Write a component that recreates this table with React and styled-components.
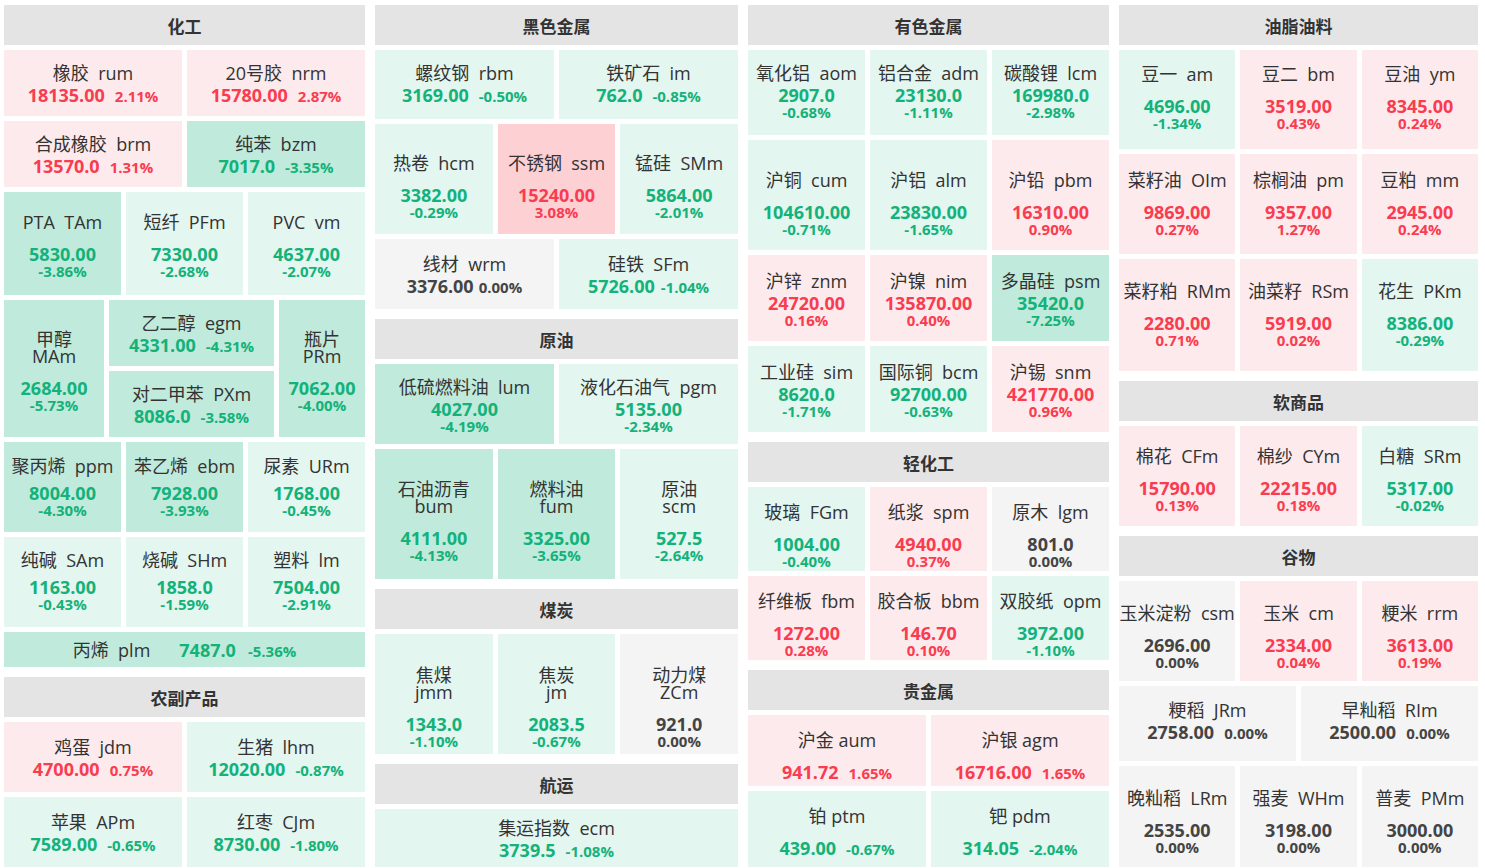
import React from 'react';
import styled, { createGlobalStyle } from 'styled-components';

const GlobalStyle = createGlobalStyle`
  html, body {
    margin: 0;
    padding: 0;
    background: #ffffff;
  }
  body {
    font-family: "Open Sans", "Noto Sans CJK SC", sans-serif;
    color: #333;
  }
`;

const Board = styled.div`
  display: grid;
  grid-template-columns: 361px 363px 361px 359px;
  column-gap: 10px;
  align-items: start;
  padding: 5px 0 0 4px;
`;

const Column = styled.div`
  display: flex;
  flex-direction: column;
  gap: 5px;
`;

const Header = styled.div`
  height: 40px;
  margin-top: ${p => (p.$first ? 0 : 5)}px;
  background: #e4e4e4;
  display: flex;
  align-items: center;
  justify-content: center;
  font-size: 17px;
  font-weight: 700;
  color: #333;
`;

const Row = styled.div`
  display: grid;
  grid-template-columns: ${p => p.$cols};
  grid-template-rows: ${p => p.$rows};
  gap: 5px;
`;

const Cell = styled.div`
  grid-row: ${p => (p.$span ? `span ${p.$span}` : 'auto')};
  min-width: 0;
  box-sizing: border-box;
  padding-top: ${p => Math.max(0, p.$shift * 2)}px;
  padding-bottom: ${p => Math.max(0, -p.$shift * 2)}px;
  background: ${p => p.$bg};
  display: flex;
  flex-direction: ${p => (p.$line ? 'row' : 'column')};
  align-items: center;
  justify-content: center;
  white-space: nowrap;
`;

const Name = styled.div`
  font-size: 18px;
  line-height: ${p => (p.$wrap ? 17 : 24)}px;
  margin-bottom: ${p => p.$gap}px;
  margin-right: ${p => (p.$line ? 29 : 0)}px;
  white-space: pre;
  text-align: center;
  color: #333;
`;

const Values = styled.div`
  display: flex;
  flex-direction: ${p => (p.$stack ? 'column' : 'row')};
  align-items: ${p => (p.$stack ? 'center' : 'baseline')};
  gap: ${p => (p.$stack ? 0 : p.$gap)}px;
`;

const Price = styled.span`
  font-size: 18px;
  font-weight: 700;
  line-height: 20px;
  color: ${p => p.$c};
`;

const Pct = styled.span`
  font-size: 15px;
  font-weight: 700;
  line-height: 14px;
  color: ${p => p.$c};
`;

const toneBg = n => {
  if (n >= 3) return '#fdd0d4';
  if (n > 0) return '#fdeaec';
  if (n === 0) return '#f4f4f4';
  if (n > -3) return '#e3f6ef';
  return '#c0eadb';
};

const toneText = n => (n > 0 ? '#f93c4f' : n < 0 ? '#13b27a' : '#444');

// mode: in = price and pct side by side, st = stacked, line = all on one line
const C = (name, code, price, pct, o = {}) => ({ name, code, price, pct, mode: 'st', gap: 0, sep: '  ', hgap: 10, ...o });
const IN = { mode: 'in' };
const LO = { gap: 10 };
const MID = { gap: 5 };
const WR = { wrap: true, gap: 13 };
const PM = { ...IN, ...LO, sep: ' ' };

const columns = [
  [
    {
      title: '化工',
      rows: [
        { h: 66, n: 2, items: [C('橡胶', 'rum', '18135.00', '2.11%', IN), C('20号胶', 'nrm', '15780.00', '2.87%', IN)] },
        { h: 66, n: 2, items: [C('合成橡胶', 'brm', '13570.0', '1.31%', IN), C('纯苯', 'bzm', '7017.0', '-3.35%', IN)] },
        { h: 103, n: 3, items: [C('PTA', 'TAm', '5830.00', '-3.86%', LO), C('短纤', 'PFm', '7330.00', '-2.68%', LO), C('PVC', 'vm', '4637.00', '-2.07%', LO)] },
        {
          tmpl: '100px 165px 1fr',
          rowsT: '66px 66px',
          items: [
            C('甲醇', 'MAm', '2684.00', '-5.73%', { ...WR, span: 2, shift: 3 }),
            C('乙二醇', 'egm', '4331.00', '-4.31%', IN),
            C('瓶片', 'PRm', '7062.00', '-4.00%', { ...WR, span: 2, shift: 3 }),
            C('对二甲苯', 'PXm', '8086.0', '-3.58%', IN),
          ],
        },
        { h: 90, n: 3, shift: -2, items: [C('聚丙烯', 'ppm', '8004.00', '-4.30%', MID), C('苯乙烯', 'ebm', '7928.00', '-3.93%', MID), C('尿素', 'URm', '1768.00', '-0.45%', MID)] },
        { h: 90, n: 3, shift: -3, items: [C('纯碱', 'SAm', '1163.00', '-0.43%', MID), C('烧碱', 'SHm', '1858.0', '-1.59%', MID), C('塑料', 'lm', '7504.00', '-2.91%', MID)] },
        { h: 35, n: 1, items: [C('丙烯', 'plm', '7487.0', '-5.36%', { mode: 'line' })] },
      ],
    },
    {
      title: '农副产品',
      rows: [
        { h: 70, n: 2, items: [C('鸡蛋', 'jdm', '4700.00', '0.75%', IN), C('生猪', 'lhm', '12020.00', '-0.87%', IN)] },
        { h: 70, n: 2, items: [C('苹果', 'APm', '7589.00', '-0.65%', IN), C('红枣', 'CJm', '8730.00', '-1.80%', IN)] },
      ],
    },
  ],
  [
    {
      title: '黑色金属',
      rows: [
        { h: 69, n: 2, shift: -2, items: [C('螺纹钢', 'rbm', '3169.00', '-0.50%', IN), C('铁矿石', 'im', '762.0', '-0.85%', IN)] },
        { h: 110, n: 3, shift: 6, items: [C('热卷', 'hcm', '3382.00', '-0.29%', LO), C('不锈钢', 'ssm', '15240.00', '3.08%', LO), C('锰硅', 'SMm', '5864.00', '-2.01%', LO)] },
        { h: 70, n: 2, items: [C('线材', 'wrm', '3376.00', '0.00%', { ...IN, hgap: 5 }), C('硅铁', 'SFm', '5726.00', '-1.04%', { ...IN, hgap: 6 })] },
      ],
    },
    {
      title: '原油',
      rows: [
        { h: 80, n: 2, items: [C('低硫燃料油', 'lum', '4027.00', '-4.19%'), C('液化石油气', 'pgm', '5135.00', '-2.34%')] },
        { h: 130, n: 3, shift: 7, items: [C('石油沥青', 'bum', '4111.00', '-4.13%', WR), C('燃料油', 'fum', '3325.00', '-3.65%', WR), C('原油', 'scm', '527.5', '-2.64%', WR)] },
      ],
    },
    {
      title: '煤炭',
      rows: [
        { h: 120, n: 3, shift: 13, items: [C('焦煤', 'jmm', '1343.0', '-1.10%', WR), C('焦炭', 'jm', '2083.5', '-0.67%', WR), C('动力煤', 'ZCm', '921.0', '0.00%', WR)] },
      ],
    },
    {
      title: '航运',
      rows: [{ h: 58, n: 1, items: [C('集运指数', 'ecm', '3739.5', '-1.08%', IN)] }],
    },
  ],
  [
    {
      title: '有色金属',
      rows: [
        { h: 85, n: 3, shift: -3, items: [C('氧化铝', 'aom', '2907.0', '-0.68%'), C('铝合金', 'adm', '23130.0', '-1.11%'), C('碳酸锂', 'lcm', '169980.0', '-2.98%')] },
        { h: 110, n: 3, shift: 7, items: [C('沪铜', 'cum', '104610.00', '-0.71%', LO), C('沪铝', 'alm', '23830.00', '-1.65%', LO), C('沪铅', 'pbm', '16310.00', '0.90%', LO)] },
        { h: 86, n: 3, items: [C('沪锌', 'znm', '24720.00', '0.16%'), C('沪镍', 'nim', '135870.00', '0.40%'), C('多晶硅', 'psm', '35420.0', '-7.25%')] },
        { h: 86, n: 3, items: [C('工业硅', 'sim', '8620.0', '-1.71%'), C('国际铜', 'bcm', '92700.00', '-0.63%'), C('沪锡', 'snm', '421770.00', '0.96%')] },
      ],
    },
    {
      title: '轻化工',
      rows: [
        { h: 84, n: 3, shift: 5, items: [C('玻璃', 'FGm', '1004.00', '-0.40%', LO), C('纸浆', 'spm', '4940.00', '0.37%', LO), C('原木', 'lgm', '801.0', '0.00%', LO)] },
        { h: 84, n: 3, shift: 5, items: [C('纤维板', 'fbm', '1272.00', '0.28%', LO), C('胶合板', 'bbm', '146.70', '0.10%', LO), C('双胶纸', 'opm', '3972.00', '-1.10%', LO)] },
      ],
    },
    {
      title: '贵金属',
      rows: [
        { h: 71, n: 2, shift: 4, items: [C('沪金', 'aum', '941.72', '1.65%', PM), C('沪银', 'agm', '16716.00', '1.65%', PM)] },
        { h: 76, n: 2, shift: 2, items: [C('铂', 'ptm', '439.00', '-0.67%', PM), C('钯', 'pdm', '314.05', '-2.04%', PM)] },
      ],
    },
  ],
  [
    {
      title: '油脂油料',
      rows: [
        { h: 99, n: 3, shift: -4, items: [C('豆一', 'am', '4696.00', '-1.34%', LO), C('豆二', 'bm', '3519.00', '0.43%', LO), C('豆油', 'ym', '8345.00', '0.24%', LO)] },
        { h: 100, n: 3, shift: -2, items: [C('菜籽油', 'OIm', '9869.00', '0.27%', LO), C('棕榈油', 'pm', '9357.00', '1.27%', LO), C('豆粕', 'mm', '2945.00', '0.24%', LO)] },
        { h: 112, n: 3, shift: -2, items: [C('菜籽粕', 'RMm', '2280.00', '0.71%', LO), C('油菜籽', 'RSm', '5919.00', '0.02%', LO), C('花生', 'PKm', '8386.00', '-0.29%', LO)] },
      ],
    },
    {
      title: '软商品',
      rows: [
        { h: 100, n: 3, shift: 2, items: [C('棉花', 'CFm', '15790.00', '0.13%', LO), C('棉纱', 'CYm', '22215.00', '0.18%', LO), C('白糖', 'SRm', '5317.00', '-0.02%', LO)] },
      ],
    },
    {
      title: '谷物',
      rows: [
        { h: 100, n: 3, shift: 4, items: [C('玉米淀粉', 'csm', '2696.00', '0.00%', LO), C('玉米', 'cm', '2334.00', '0.04%', LO), C('粳米', 'rrm', '3613.00', '0.19%', LO)] },
        { h: 75, n: 2, shift: -4, items: [C('粳稻', 'JRm', '2758.00', '0.00%', IN), C('早籼稻', 'RIm', '2500.00', '0.00%', IN)] },
        { h: 101, n: 3, shift: 3, items: [C('晚籼稻', 'LRm', '2535.00', '0.00%', LO), C('强麦', 'WHm', '3198.00', '0.00%', LO), C('普麦', 'PMm', '3000.00', '0.00%', LO)] },
      ],
    },
  ],
];

const Quote = ({ d, shift }) => {
  const n = parseFloat(d.pct);
  const c = toneText(n);
  const line = d.mode === 'line';
  return (
    <Cell $bg={toneBg(n)} $span={d.span} $line={line} $shift={d.shift ?? shift ?? 0}>
      <Name $wrap={d.wrap} $gap={line ? 0 : d.gap} $line={line}>
        {d.wrap ? (
          <>
            {d.name}
            <br />
            {d.code}
          </>
        ) : (
          `${d.name}${d.sep}${d.code}`
        )}
      </Name>
      <Values $stack={d.mode === 'st'} $gap={line ? 12 : d.hgap}>
        <Price $c={c}>{d.price}</Price>
        <Pct $c={c}>{d.pct}</Pct>
      </Values>
    </Cell>
  );
};

const Section = ({ section, first }) => (
  <>
    <Header $first={first}>{section.title}</Header>
    {section.rows.map((r, i) => (
      <Row key={i} $cols={r.tmpl || `repeat(${r.n}, 1fr)`} $rows={r.rowsT || `${r.h}px`}>
        {r.items.map(d => (
          <Quote key={d.code} d={d} shift={r.shift} />
        ))}
      </Row>
    ))}
  </>
);

export default function App() {
  return (
    <>
      <GlobalStyle />
      <Board>
        {columns.map((col, ci) => (
          <Column key={ci}>
            {col.map((s, si) => (
              <Section key={s.title} section={s} first={si === 0} />
            ))}
          </Column>
        ))}
      </Board>
    </>
  );
}
